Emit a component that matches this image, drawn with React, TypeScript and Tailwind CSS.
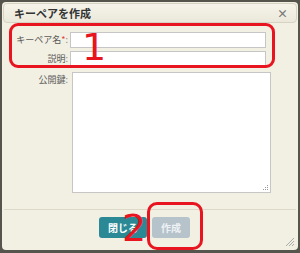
const jp = "font-['Noto_Sans_CJK_JP',sans-serif]"

function Field({ label, required, children }: { label: string; required?: boolean; children: React.ReactNode }) {
  return (
    <div className="flex items-start">
      <div className="w-[65px] shrink-0 text-right text-[9px] leading-[16px] text-[#5a5a5a]">
        {label}
        {required && <span className="text-[#e23a3a]">*</span>}
        <span className="text-[#8a8a8a]">:</span>
      </div>
      {children}
    </div>
  )
}

export default function App() {
  return (
    <div className={`relative h-[253px] w-[300px] overflow-hidden bg-[#55554d] px-[2px] pb-[3px] pt-[2px] ${jp}`}>
      <div className="flex h-full flex-col rounded-[4px] bg-[#f2f0e3] p-[1px]">
        {/* title bar */}
        <div className="flex h-[20px] items-center justify-between rounded-[4px] border border-[#d6d3c3] bg-gradient-to-b from-[#f6f4ea] to-[#ebe8db] pl-[10px] pr-[8px]">
          <span className="text-[11px] font-bold text-[#333]">キーペアを作成</span>
          <span className="text-[11px] font-bold leading-none text-[#777]">×</span>
        </div>

        {/* form */}
        <div className="flex flex-col gap-[3px] pt-[9px]">
          <Field label="キーペア名" required>
            <div className="ml-[2px] h-[16px] w-[196px] border border-[#c6c6c6] bg-white" />
          </Field>
          <Field label="説明">
            <div className="ml-[2px] h-[15px] w-[196px] border border-[#c6c6c6] bg-white" />
          </Field>
          <div className="mt-[2px]">
            <Field label="公開鍵">
              <div className="relative ml-[4px] h-[121px] w-[199px] border border-[#c6c6c6] bg-white">
                <svg className="absolute bottom-[1px] right-[1px]" width="6" height="6" viewBox="0 0 6 6">
                  <rect x="4" y="0" width="1" height="1" fill="#999" />
                  <rect x="2" y="2" width="1" height="1" fill="#999" />
                  <rect x="4" y="2" width="1" height="1" fill="#999" />
                  <rect x="0" y="4" width="1" height="1" fill="#999" />
                  <rect x="2" y="4" width="1" height="1" fill="#999" />
                  <rect x="4" y="4" width="1" height="1" fill="#999" />
                </svg>
              </div>
            </Field>
          </div>
        </div>

        <div className="mx-[1px] mt-[16px] h-px bg-[#dcd9c9]" />

        {/* buttons */}
        <div className="relative flex flex-1 items-start justify-center gap-[5px] pr-[11px] pt-[7px]">
          <button className="h-[21px] w-[48px] rounded-[3px] bg-[#2b8995] text-[10px] font-bold text-white">閉じる</button>
          <button className="h-[21px] w-[38px] rounded-[3px] bg-[#b6c3cb] text-[10px] font-bold text-[#eef2f4]">作成</button>
          <svg className="absolute bottom-[2px] right-[2px]" width="10" height="10" viewBox="0 0 10 10">
            <path d="M9 1L1 9M9 4L4 9M9 7L7 9" stroke="#aaa" strokeWidth="1" />
          </svg>
        </div>
      </div>

      {/* red annotations */}
      <div className="absolute left-[9px] top-[23px] h-[45px] w-[266px] rounded-[9px] border-[3px] border-[#e8141f]" />
      <div className="absolute left-[82px] top-[28px] font-['DejaVu_Sans',sans-serif] text-[38px] leading-none text-[#e8141f]">1</div>
      <div className="absolute left-[147px] top-[202px] h-[48px] w-[56px] rounded-[10px] border-[3px] border-[#e8141f]" />
      <div className="absolute left-[122px] top-[209px] font-['DejaVu_Sans',sans-serif] text-[38px] leading-none text-[#e8141f]">2</div>
    </div>
  )
}
